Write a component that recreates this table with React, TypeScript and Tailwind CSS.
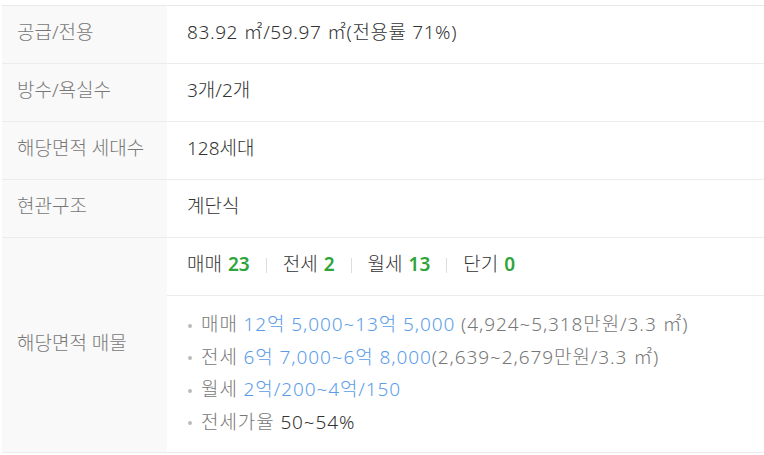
const font = { fontFamily: '"Noto Sans", "Noto Sans CJK KR", sans-serif' };

type Row = { label: string; value: React.ReactNode };

const rows: Row[] = [
  { label: "공급/전용", value: <span className="tracking-[0.6px]">83.92 ㎡/59.97 ㎡(전용률 71%)</span> },
  { label: "방수/욕실수", value: "3개/2개" },
  { label: "해당면적 세대수", value: "128세대" },
  { label: "현관구조", value: "계단식" },
];

const counts = [
  { name: "매매", n: 23 },
  { name: "전세", n: 2 },
  { name: "월세", n: 13 },
  { name: "단기", n: 0 },
];

function Bullet({ children }: { children: React.ReactNode }) {
  return (
    <li className="flex items-center h-[32.5px]">
      <span className="w-[4px] h-[4px] rounded-full bg-[#bbbbbb] mr-[9px] mt-[3px]" />
      <span>{children}</span>
    </li>
  );
}

export default function App() {
  return (
    <div className="w-[764px] h-[455px] bg-white pt-[5px] pl-[2px]" style={font}>
      <div className="border-t border-[#e8e8e8] text-[19px] leading-[24px] font-light">
        {rows.map((r) => (
          <div key={r.label} className="flex h-[58px] border-b border-[#ececec]">
            <div className="w-[165px] bg-[#f9f9f9] flex items-center pl-[15px] pb-[5px] text-[#777777]">
              {r.label}
            </div>
            <div className="flex-1 flex items-center pl-[20px] pb-[5px] text-[#333333]">{r.value}</div>
          </div>
        ))}
        <div className="flex h-[215px] border-b border-[#ececec]">
          <div className="w-[165px] bg-[#f9f9f9] flex items-center pl-[15px] pb-[4px] text-[#777777]">
            해당면적 매물
          </div>
          <div className="flex-1 flex flex-col">
            <div className="h-[58px] flex items-center pl-[20px] pb-[5px] border-b border-[#ececec] text-[#333333]">
              {counts.map((c, i) => (
                <div key={c.name} className="flex items-center">
                  {i > 0 && <span className="w-px h-[15px] bg-[#dddddd] mx-[16px] mt-[3px]" />}
                  <span>{c.name}</span>
                  <span className="ml-[6px] font-semibold text-[#2ea43a]">{c.n}</span>
                </div>
              ))}
            </div>
            <ul className="pl-[21px] pt-[12px] text-[#777777] tracking-[0.9px]">
              <Bullet>
                매매 <span className="text-[#5b9de8]">12억 5,000~13억 5,000</span> (4,924~5,318만원/3.3 ㎡)
              </Bullet>
              <Bullet>
                전세 <span className="text-[#5b9de8]">6억 7,000~6억 8,000</span>(2,639~2,679만원/3.3 ㎡)
              </Bullet>
              <Bullet>
                월세 <span className="text-[#5b9de8]">2억/200~4억/150</span>
              </Bullet>
              <Bullet>
                전세가율 <span className="text-[#333333]">50~54%</span>
              </Bullet>
            </ul>
          </div>
        </div>
      </div>
    </div>
  );
}
